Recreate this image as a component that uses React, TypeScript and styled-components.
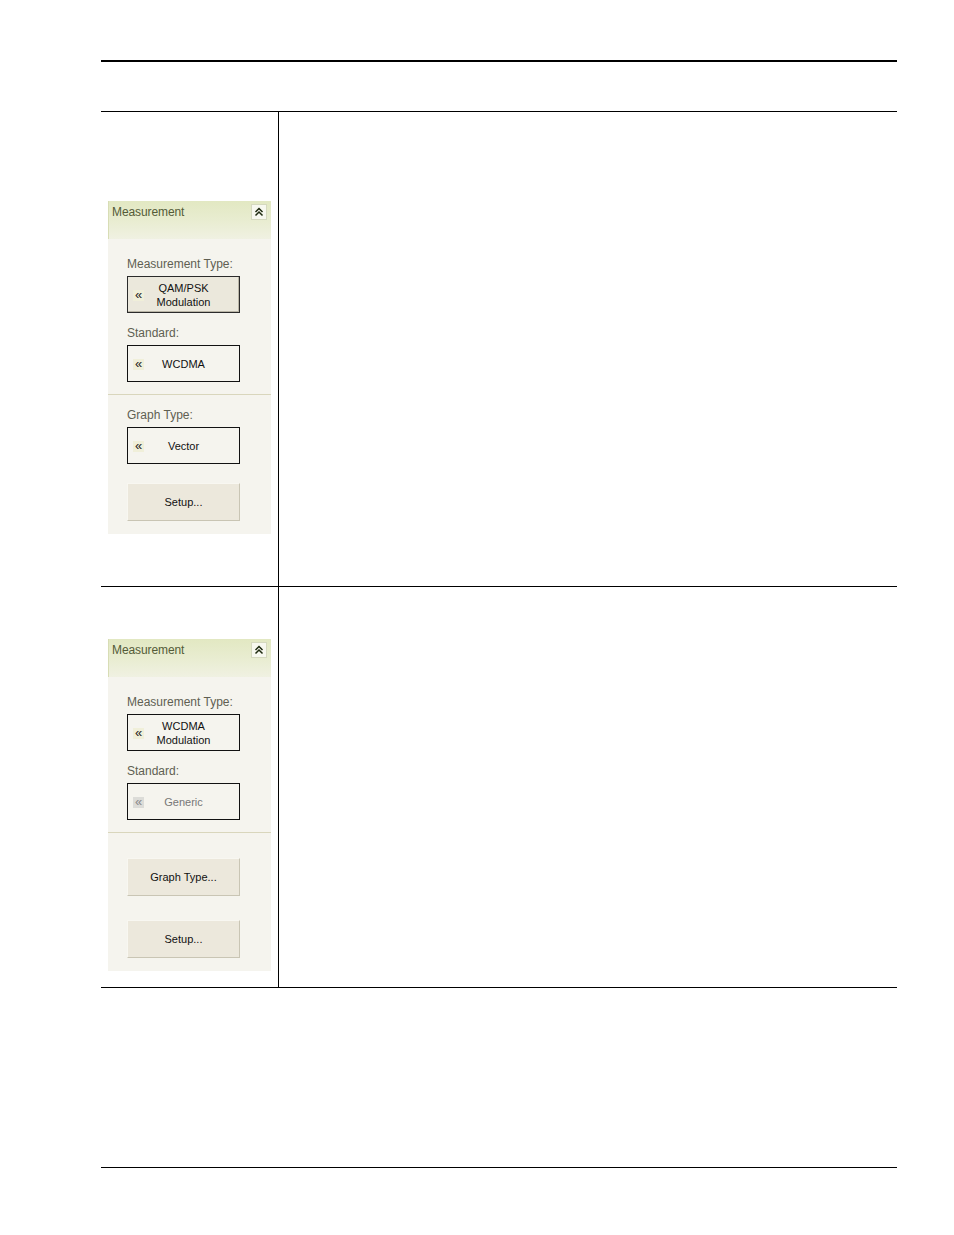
import styled, { createGlobalStyle } from "styled-components";

const GlobalStyle = createGlobalStyle`
    html, body {
        margin: 0;
        padding: 0;
        background: #ffffff;
    }
    body {
        font-family: "Liberation Sans", Arial, sans-serif;
    }
`;

interface SelectItem {
    kind: "select";
    label: string;
    lines: string[];
    variant: "active" | "plain" | "disabled";
}

interface ButtonItem {
    kind: "button";
    text: string;
}

type PanelItem = SelectItem | ButtonItem | { kind: "divider" };

const firstPanel: PanelItem[] = [
    { kind: "select", label: "Measurement Type:", lines: ["QAM/PSK", "Modulation"], variant: "active" },
    { kind: "select", label: "Standard:", lines: ["WCDMA"], variant: "plain" },
    { kind: "divider" },
    { kind: "select", label: "Graph Type:", lines: ["Vector"], variant: "plain" },
    { kind: "button", text: "Setup..." },
];

const secondPanel: PanelItem[] = [
    { kind: "select", label: "Measurement Type:", lines: ["WCDMA", "Modulation"], variant: "plain" },
    { kind: "select", label: "Standard:", lines: ["Generic"], variant: "disabled" },
    { kind: "divider" },
    { kind: "button", text: "Graph Type..." },
    { kind: "button", text: "Setup..." },
];

function CollapseIcon() {
    return (
        <svg width="10" height="10" viewBox="0 0 10 10">
            <path d="M1.5 5 L5 1.5 L8.5 5" fill="none" stroke="#1e2a10" strokeWidth="1.5" />
            <path d="M1.5 8.5 L5 5 L8.5 8.5" fill="none" stroke="#1e2a10" strokeWidth="1.5" />
        </svg>
    );
}

function MeasurementPanel({ items }: { items: PanelItem[] }) {
    return (
        <Panel>
            <PanelHeader>
                <HeaderTitle>Measurement</HeaderTitle>
                <CollapseButton>
                    <CollapseIcon />
                </CollapseButton>
            </PanelHeader>
            <PanelBody>
                {items.map((item, index) => {
                    if (item.kind === "divider") return <Divider key={index} />;
                    if (item.kind === "button")
                        return (
                            <ActionButton key={index} type="button">
                                {item.text}
                            </ActionButton>
                        );
                    return (
                        <Field key={index}>
                            <FieldLabel>{item.label}</FieldLabel>
                            <SelectBox variant={item.variant}>
                                <Arrow disabled={item.variant === "disabled"}>«</Arrow>
                                <SelectText disabled={item.variant === "disabled"}>
                                    {item.lines.map((line) => (
                                        <span key={line}>{line}</span>
                                    ))}
                                </SelectText>
                            </SelectBox>
                        </Field>
                    );
                })}
            </PanelBody>
        </Panel>
    );
}

export default function App() {
    return (
        <>
            <GlobalStyle />
            <Page>
                <TopRule />
                <Table>
                    <Row height={475} padTop={90}>
                        <LeftCell>
                            <MeasurementPanel items={firstPanel} />
                        </LeftCell>
                        <RightCell />
                    </Row>
                    <Row height={401} padTop={53}>
                        <LeftCell>
                            <MeasurementPanel items={secondPanel} />
                        </LeftCell>
                        <RightCell />
                    </Row>
                </Table>
                <FooterRule />
            </Page>
        </>
    );
}

const Page = styled.div`
    width: 954px;
    height: 1235px;
    padding: 0 57px 0 101px;
    box-sizing: border-box;
    overflow: hidden;
`;

const TopRule = styled.div`
    margin-top: 60px;
    height: 2px;
    background: #000;
`;

const Table = styled.div`
    margin-top: 49px;
    border-top: 1px solid #000;
    display: flex;
    flex-direction: column;
`;

const Row = styled.div<{ height: number; padTop: number }>`
    display: grid;
    grid-template-columns: 178px 1fr;
    height: ${(p) => p.height}px;
    border-bottom: 1px solid #000;
    box-sizing: border-box;
    & > div:first-child {
        padding-top: ${(p) => p.padTop - 1}px;
    }
`;

const LeftCell = styled.div`
    border-right: 1px solid #000;
    padding-left: 7px;
    box-sizing: border-box;
`;

const RightCell = styled.div``;

const FooterRule = styled.div`
    margin-top: 179px;
    height: 1px;
    background: #000;
`;

const Panel = styled.div`
    width: 163px;
    background: #f5f4ee;
    padding-bottom: 13px;
`;

const PanelHeader = styled.div`
    height: 38px;
    display: flex;
    justify-content: space-between;
    align-items: flex-start;
    padding: 3px 4px 0 3px;
    box-sizing: border-box;
    background: linear-gradient(180deg, #e2e8c2 0%, #e9edd2 55%, #f0f1e2 100%);
    border-left: 1px solid #d8ddb5;
`;

const HeaderTitle = styled.span`
    margin-top: 1px;
    font-size: 12px;
    color: #545b38;
    letter-spacing: -0.1px;
`;

const CollapseButton = styled.div`
    width: 16px;
    height: 16px;
    display: flex;
    align-items: center;
    justify-content: center;
    background: #f7f8ef;
    border: 1px solid #d5d9bf;
    box-sizing: border-box;
`;

const PanelBody = styled.div`
    display: flex;
    flex-direction: column;
    padding-top: 18px;
`;

const Field = styled.div`
    display: flex;
    flex-direction: column;
    padding-left: 19px;
    & + & {
        margin-top: 13px;
    }
`;

const FieldLabel = styled.div`
    height: 14px;
    line-height: 14px;
    font-size: 12px;
    color: #5f5f52;
    margin-bottom: 5px;
`;

const SelectBox = styled.div<{ variant: "active" | "plain" | "disabled" }>`
    width: 113px;
    height: 37px;
    box-sizing: border-box;
    display: flex;
    align-items: center;
    padding-left: 5px;
    border: ${(p) => (p.variant === "active" ? "1px solid #2b2b2b" : "1px solid #111")};
    background: ${(p) => (p.variant === "active" ? "#ebe8dc" : "#f5f4ee")};
    box-shadow: ${(p) => (p.variant === "active" ? "inset -1px -1px 0 #b9b5a6" : "none")};
`;

const Arrow = styled.span<{ disabled?: boolean }>`
    width: 11px;
    height: 11px;
    font-size: 13px;
    line-height: 10px;
    text-align: center;
    color: ${(p) => (p.disabled ? "#8a8a8a" : "#222")};
    background: ${(p) => (p.disabled ? "#dcdcd8" : "#f0efd9")};
    margin-top: 2px;
`;

const SelectText = styled.div<{ disabled?: boolean }>`
    flex: 1;
    display: flex;
    flex-direction: column;
    align-items: center;
    padding-right: 16px;
    font-size: 11px;
    line-height: 14px;
    color: ${(p) => (p.disabled ? "#777" : "#111")};
`;

const Divider = styled.div`
    height: 1px;
    flex-shrink: 0;
    background: #d9d6bc;
    margin-top: 12px;
    & + ${Field} {
        margin-top: 13px;
    }
`;

const ActionButton = styled.button`
    margin-left: 19px;
    width: 113px;
    height: 38px;
    flex-shrink: 0;
    box-sizing: border-box;
    border: 1px solid #f8f7f1;
    border-right-color: #c9c5b4;
    border-bottom-color: #c9c5b4;
    background: #ece8dc;
    font-family: "Liberation Sans", Arial, sans-serif;
    font-size: 11px;
    color: #111;
    padding: 0;
    ${Field} + & {
        margin-top: 19px;
    }
    ${Divider} + & {
        margin-top: 25px;
    }
    & + & {
        margin-top: 24px;
    }
`;
